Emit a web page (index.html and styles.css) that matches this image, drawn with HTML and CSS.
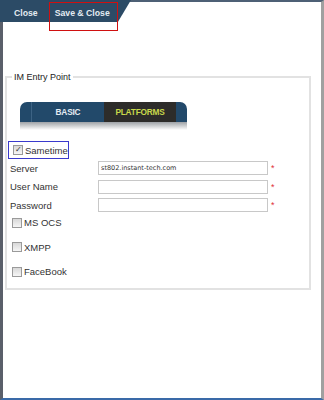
FILE: index.html
```html
<!DOCTYPE html>
<html lang="en">
<head>
    <meta charset="UTF-8">
    <title>IM Entry Point</title>
    <link rel="stylesheet" href="styles.css">
</head>
<body>
    <div class="window">
        <div class="topbar">
            <div class="toolbar">
                <span class="btn">Close</span>
                <span class="btn">Save &amp; Close</span>
            </div>
            <div class="highlight-save"></div>
        </div>

        <fieldset class="entry">
            <legend>IM Entry Point</legend>

            <div class="tabs">
                <div class="tab-edge"></div>
                <div class="tab">BASIC</div>
                <div class="tab active">PLATFORMS</div>
                <div class="tab-edge right"></div>
            </div>
            <div class="tabs-shadow"></div>

            <div class="platform sametime">
                <span class="check">&#10003;</span>
                <span>Sametime</span>
            </div>

            <div class="row">
                <label>Server</label>
                <input class="field" type="text" value="st802.instant-tech.com">
                <span class="req">*</span>
            </div>
            <div class="row">
                <label>User Name</label>
                <input class="field" type="text">
                <span class="req">*</span>
            </div>
            <div class="row">
                <label>Password</label>
                <input class="field" type="text">
                <span class="req">*</span>
            </div>

            <div class="others">
                <div class="platform"><span class="check"></span><span>MS OCS</span></div>
                <div class="platform"><span class="check"></span><span>XMPP</span></div>
                <div class="platform"><span class="check"></span><span>FaceBook</span></div>
            </div>
        </fieldset>
    </div>
</body>
</html>
```

FILE: styles.css
```css
body {
    margin: 0;
    font-family: "Liberation Sans", Arial, sans-serif;
    background: #fff;
    color: #333;
}
.window {
    position: relative;
    height: 400px;
    box-sizing: border-box;
    border-left: 3px solid #5a5f6a;
    border-right: 3px solid #a0a0a0;
    border-bottom: 2px solid #3a6aa8;
    border-top: 2px solid #4d6075;
}
.topbar {
    height: 20px;
}
.toolbar {
    width: 131px;
    height: 22px;
    margin: -2px 0 0 -3px;
    background: #2c4b66;
    clip-path: polygon(0 0, 100% 0, 90% 100%, 0 100%);
    display: flex;
    align-items: center;
    gap: 17px;
    padding: 4px 0 0 14px;
    box-sizing: border-box;
}
.btn {
    color: #e4ebf2;
    font-weight: bold;
    font-size: 8.7px;
}
.highlight-save {
    position: absolute;
    left: 46px;
    top: 0;
    width: 69px;
    height: 29px;
    border: 1px solid #d01010;
    box-sizing: border-box;
}
.entry {
    margin: 52px 10px 0 2px;
    padding: 20px 0 10px 3px;
    border: 2px solid #e2e2e2;
}
.entry legend {
    font-size: 9px;
    padding: 0 2px;
    margin-left: 2px;
    color: #222;
}
.tabs {
    display: flex;
    margin-left: 10px;
    width: 167px;
    height: 20px;
    background: #22496a;
    border-radius: 7px 7px 0 0;
    overflow: hidden;
}
.tab-edge {
    width: 11px;
    border-right: 1px solid #3d6384;
}
.tab-edge.right {
    border-right: none;
    flex: 1;
}
.tab {
    width: 72px;
    color: #e4ecf2;
    font-weight: bold;
    font-size: 8.3px;
    letter-spacing: -0.2px;
    display: flex;
    align-items: center;
    justify-content: center;
}
.tab.active {
    background: #2d2c2a;
    color: #c9d94a;
}
.tabs-shadow {
    margin-left: 10px;
    width: 167px;
    height: 8px;
    background: linear-gradient(#9ea2a6, #fff);
}
.platform {
    display: flex;
    align-items: center;
    gap: 2px;
    font-size: 9.5px;
    height: 12px;
    margin-left: 2px;
    color: #333;
}
.platform.sametime {
    margin: 11px 0 2px -2px;
    width: 61px;
    height: 18px;
    padding: 0 0 0 4px;
    border: 1px solid #3a3acc;
    box-sizing: border-box;
}
.check {
    width: 8px;
    height: 8px;
    border: 1px solid #9a9a9a;
    background: linear-gradient(#d8d8d8, #f6f6f6);
    font-size: 8px;
    line-height: 8px;
    text-align: center;
    color: #333;
}
.row {
    display: flex;
    align-items: center;
    height: 14px;
    margin-bottom: 4.5px;
    font-size: 9.5px;
}
.row label {
    width: 88px;
}
.field {
    width: 170px;
    height: 14px;
    box-sizing: border-box;
    border: 1px solid #c8c8c8;
    padding: 0 2px;
    font-family: "DejaVu Sans", Verdana, sans-serif;
    font-size: 6.5px;
    color: #333;
}
.req {
    color: #e0303a;
    font-size: 9px;
    margin-left: 3px;
}
.others {
    display: flex;
    flex-direction: column;
    gap: 12.5px;
    margin-top: 4.5px;
}
```
